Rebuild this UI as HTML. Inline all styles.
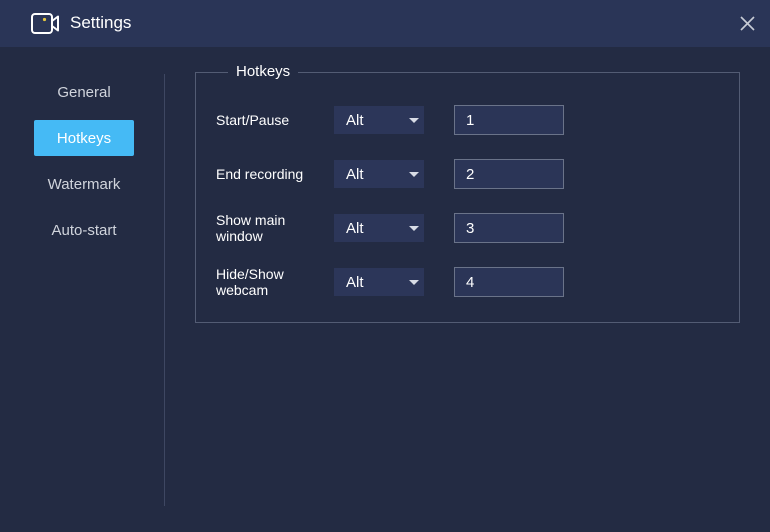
<!DOCTYPE html><html><head><style>
body{margin:0;width:770px;height:532px;background:#232b43;font-family:"Liberation Sans",sans-serif;position:relative;overflow:hidden;color:#fff}
.hd{position:absolute;left:0;top:0;width:770px;height:47px;background:#2a3557}
.t{position:absolute;left:70px;top:13px;font-size:17px;color:#fff}
.nav{position:absolute;left:34px;width:100px;height:36px;line-height:38px;text-align:center;font-size:15px;color:#d0d4dc}
.act{background:#45baf5;color:#fff;border-radius:2px}
.div{position:absolute;left:164px;top:74px;width:1px;height:432px;background:#3e4762}
.fs{position:absolute;left:195px;top:72px;width:543px;height:249px;border:1px solid #535c74}
.lg{position:absolute;left:228px;top:63px;padding:0 8px;background:#232b43;font-size:15px}
.lb{position:absolute;left:216px;font-size:14px;line-height:16px;color:#fff}
.dd{position:absolute;left:334px;width:90px;height:28px;background:#2c3659;font-size:15px;line-height:28px}
.dd span{position:absolute;left:12px;top:1px}
.dd i{position:absolute;right:5px;top:12px;border-left:5px solid transparent;border-right:5px solid transparent;border-top:5px solid #d8dce6}
.in{position:absolute;left:454px;width:108px;height:28px;border:1px solid #6a7389;background:#2b3557;font-size:15px;line-height:28px;box-sizing:content-box}
.in span{position:absolute;left:11px;top:1px}
</style></head><body>
<div class="hd"></div>
<svg style="position:absolute;left:30px;top:12px" width="31" height="23" viewBox="0 0 31 23"><rect x="2" y="2" width="20" height="19" rx="3" fill="none" stroke="#fff" stroke-width="2"/><path d="M22 9 L28 4.5 V18.5 L22 14" fill="none" stroke="#fff" stroke-width="2" stroke-linejoin="round"/><circle cx="14.5" cy="7.5" r="1.6" fill="#e6c840"/></svg>
<div class="t">Settings</div>
<svg style="position:absolute;left:740px;top:16px" width="15" height="15"><path d="M1 1L14 14M14 1L1 14" stroke="#c8ccd6" stroke-width="1.6"/></svg>
<div class="nav" style="top:74px">General</div>
<div class="nav act" style="top:120px">Hotkeys</div>
<div class="nav" style="top:166px">Watermark</div>
<div class="nav" style="top:212px">Auto-start</div>
<div class="div"></div>
<div class="fs"></div><div class="lg">Hotkeys</div>
<div class="lb" style="top:112px">Start/Pause</div>
<div class="lb" style="top:166px">End recording</div>
<div class="lb" style="top:212px">Show main<br>window</div>
<div class="lb" style="top:266px">Hide/Show<br>webcam</div>
<div class="dd" style="top:106px"><span>Alt</span><i></i></div>
<div class="dd" style="top:160px"><span>Alt</span><i></i></div>
<div class="dd" style="top:214px"><span>Alt</span><i></i></div>
<div class="dd" style="top:268px"><span>Alt</span><i></i></div>
<div class="in" style="top:105px"><span>1</span></div>
<div class="in" style="top:159px"><span>2</span></div>
<div class="in" style="top:213px"><span>3</span></div>
<div class="in" style="top:267px"><span>4</span></div>
</body></html>
